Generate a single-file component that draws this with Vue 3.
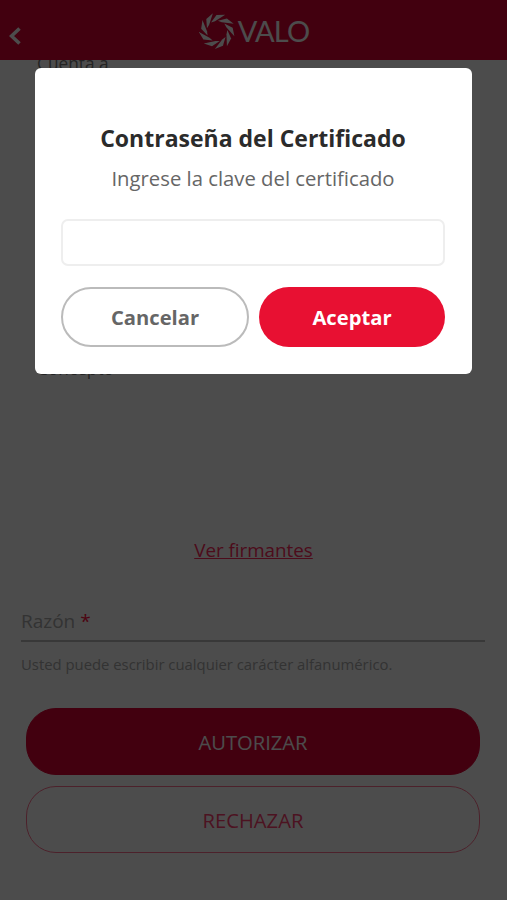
<template>
  <div class="screen">
    <header class="header">
      <svg class="back" width="12" height="18" viewBox="0 0 12 18">
        <path d="M10.5 1.5 L2.5 9 L10.5 16.5" />
      </svg>
      <div class="brand">
        <svg class="logo" width="36" height="36" viewBox="-18 -18 36 36">
          <path
            v-for="angle in blades"
            :key="angle"
            d="M-6 -8.5 L-0.5 -16 L8.2 -16.2 L-2 -9.8 Z"
            :transform="`rotate(${angle})`"
          />
        </svg>
        <span class="brand-name">VALO</span>
      </div>
    </header>

    <main class="content">
      <section class="details">
        <p class="label account">Cuenta a</p>
        <p class="label concept">Concepto</p>
      </section>

      <a class="signers">Ver firmantes</a>

      <div class="field">
        <label class="field-label">Razón <span class="required">*</span></label>
        <p class="hint">Usted puede escribir cualquier carácter alfanumérico.</p>
      </div>

      <div class="actions">
        <button class="action primary">AUTORIZAR</button>
        <button class="action outline">RECHAZAR</button>
      </div>
    </main>

    <div class="overlay">
      <div class="modal">
        <h2 class="title">Contraseña del Certificado</h2>
        <p class="message">Ingrese la clave del certificado</p>
        <input v-model="password" class="password" type="password" />
        <div class="buttons">
          <button class="button cancel">Cancelar</button>
          <button class="button accept">Aceptar</button>
        </div>
      </div>
    </div>
  </div>
</template>

<script setup>
import { ref } from "vue";

const password = ref("");

// nine identical blades around the logo
const blades = Array.from({ length: 9 }, (_, i) => i * 40);
</script>

<style>
body {
  margin: 0;
  background: #fff;
}
</style>

<style scoped>
.screen {
  position: relative;
  height: 900px;
  overflow: hidden;
  display: flex;
  flex-direction: column;
  background: #fff;
  font-family: "Open Sans", "Noto Sans", sans-serif;
}

.screen * {
  box-sizing: border-box;
}

p,
h2 {
  margin: 0;
}

button {
  font-family: inherit;
  padding: 0;
}

.header {
  position: relative;
  z-index: 1;
  height: 60px;
  flex: none;
  display: grid;
  grid-template-columns: 30px 1fr 30px;
  background: #dc0032;
}

.back {
  margin: 27px 0 0 9px;
  fill: none;
  stroke: #fff;
  stroke-width: 3.6;
}

.brand {
  display: flex;
  justify-content: center;
  align-items: center;
  gap: 3px;
  padding: 2px 0 0 1px;
}

.logo {
  fill: #fff;
}

.brand-name {
  font-family: Lato, sans-serif;
  font-size: 29px;
  letter-spacing: -0.8px;
  line-height: 36px;
  color: #fff;
}

.content {
  flex: 1;
  display: flex;
  flex-direction: column;
}

.details {
  flex: none;
  height: 476px;
  padding-left: 37px;
}

.label {
  font-size: 17.3px;
  line-height: 24px;
  color: #777;
}

.account {
  margin-top: -8px;
}

.concept {
  margin-top: 281px;
}

.signers {
  align-self: center;
  font-size: 18.8px;
  line-height: 28px;
  color: #ff2a5c;
  text-decoration: underline;
}

.field {
  margin: 40px 22px 0 21px;
}

.field-label {
  display: block;
  height: 38px;
  border-bottom: 2px solid #bbb;
  font-size: 19px;
  line-height: 34px;
  color: #aaa;
}

.required {
  color: #ff1040;
}

.hint {
  margin-top: 12px;
  font-size: 14.85px;
  line-height: 20px;
  color: #aaa;
}

.actions {
  margin: 34px 27px 0 26px;
  display: grid;
  gap: 11px;
}

.action {
  height: 67px;
  border: 1px solid #dc0032;
  border-radius: 30px;
  font-size: 20.2px;
}

.primary {
  background: #dc0032;
  color: #fff;
}

.outline {
  padding-top: 1px;
  border-color: #ff7090;
  background: #fff;
  color: #ff4070;
}

.overlay {
  position: absolute;
  z-index: 2;
  inset: 0;
  padding: 68px 35px 0;
  background: rgba(0, 0, 0, 0.7);
}

.modal {
  height: 306px;
  padding: 53px 27px 0 26px;
  border-radius: 6px;
  background: #fff;
  text-align: center;
}

.title {
  font-size: 23px;
  line-height: 34px;
  color: #2b2b2b;
  white-space: nowrap;
}

.message {
  margin-top: 8px;
  font-size: 20.3px;
  line-height: 30px;
  color: #666;
  white-space: nowrap;
}

.password {
  display: block;
  width: 100%;
  height: 47px;
  margin-top: 26px;
  border: 2px solid #eee;
  border-radius: 7px;
  background: #fff;
}

.buttons {
  display: grid;
  grid-template-columns: 188px 1fr;
  gap: 10px;
  margin-top: 21px;
}

.button {
  height: 60px;
  border: none;
  border-radius: 30px;
  font-size: 20.2px;
  font-weight: 700;
}

.cancel {
  border: 2px solid #bbb;
  background: #fff;
  color: #666;
}

.accept {
  background: #e81032;
  color: #fff;
}
</style>
